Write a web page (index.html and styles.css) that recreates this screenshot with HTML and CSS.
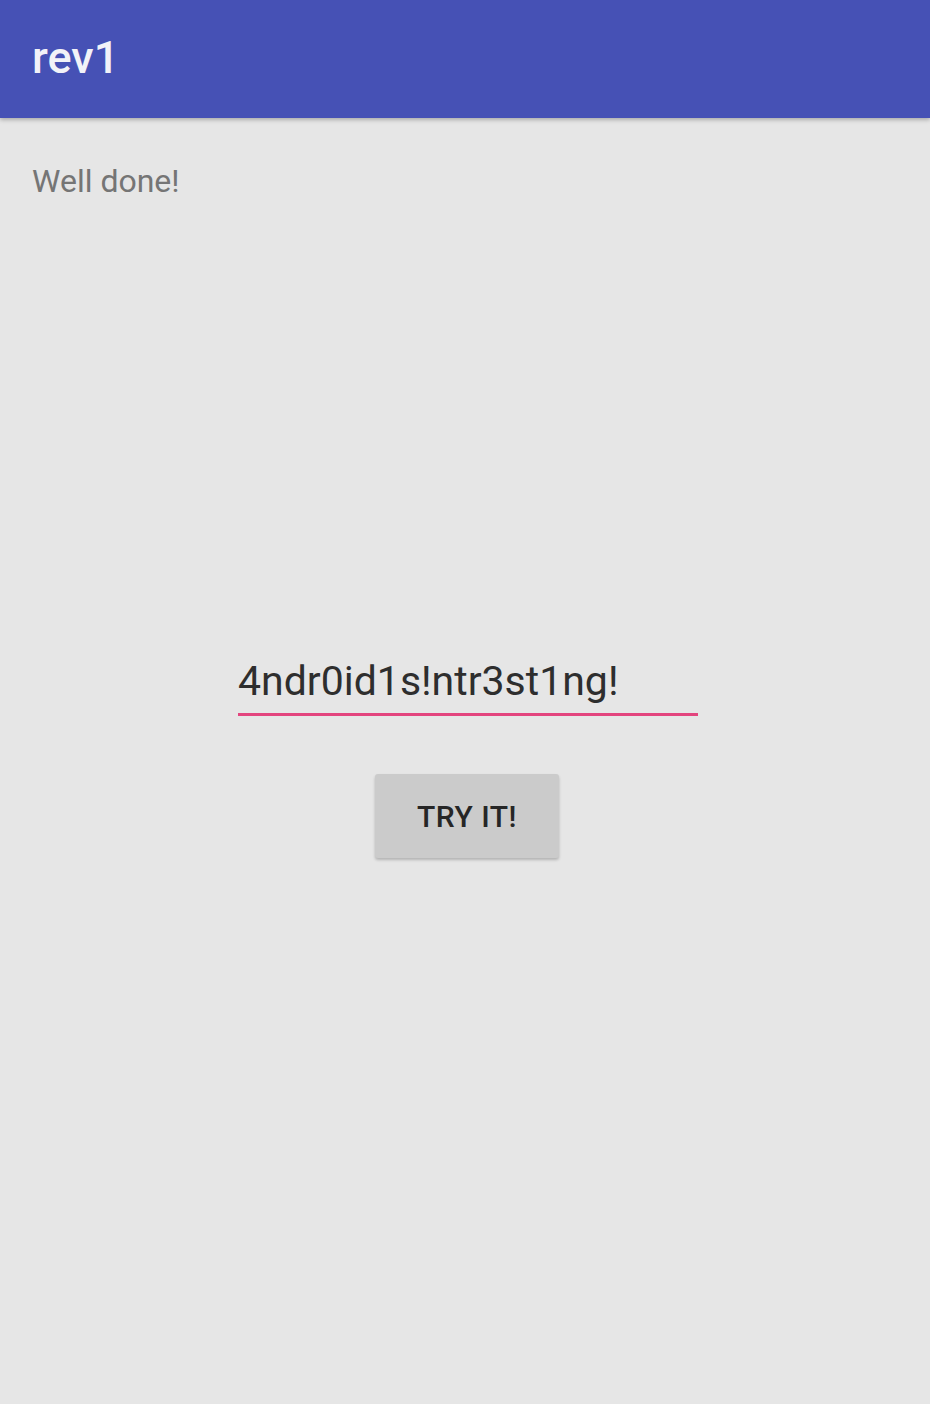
FILE: index.html
```html
<!DOCTYPE html>
<html>
<head>
<meta charset="utf-8">
<link rel="stylesheet" href="styles.css">
</head>
<body>
<header class="appbar"><span class="title">rev1</span></header>
<main class="content">
  <p class="status">Well done!</p>
  <div class="form">
    <div class="field"><span class="value">4ndr0id1s!ntr3st1ng!</span></div>
    <button class="btn">TRY IT!</button>
  </div>
</main>
</body>
</html>
```
FILE: styles.css
```css
html, body { margin: 0; padding: 0; }
body {
  width: 930px;
  height: 1404px;
  background: #e6e6e6;
  font-family: Roboto, "Noto Sans", sans-serif;
  overflow: hidden;
}
.appbar {
  height: 118px;
  background: #4651b5;
  display: flex;
  align-items: center;
  padding-left: 32px;
  box-shadow: 0 2px 4px rgba(0,0,0,0.25);
  position: relative;
}
.title {
  color: #f2f2f8;
  font-size: 45px;
  font-weight: 500;
  margin-top: -3px;
}
.content { padding: 0 32px; }
.status {
  margin: 43px 0 0;
  font-size: 32px;
  color: #757575;
  line-height: 40px;
}
.form {
  display: flex;
  flex-direction: column;
  align-items: center;
  margin-top: 456px;
  padding-left: 4px;
}
.field {
  width: 460px;
  border-bottom: 3px solid #e3457e;
  padding-bottom: 8px;
  margin-left: 2px;
}
.value {
  font-size: 41px;
  color: #2e2e2e;
  line-height: 48px;
  display: block;
}
.btn {
  margin-top: 58px;
  width: 184px;
  height: 84px;
  border: none;
  border-radius: 3px;
  background: #cbcbcb;
  box-shadow: 0 2px 3px rgba(0,0,0,0.22);
  font-family: Roboto, "Noto Sans", sans-serif;
  font-size: 30px;
  font-weight: 500;
  color: #262626;
  letter-spacing: 0.5px;
}
```
